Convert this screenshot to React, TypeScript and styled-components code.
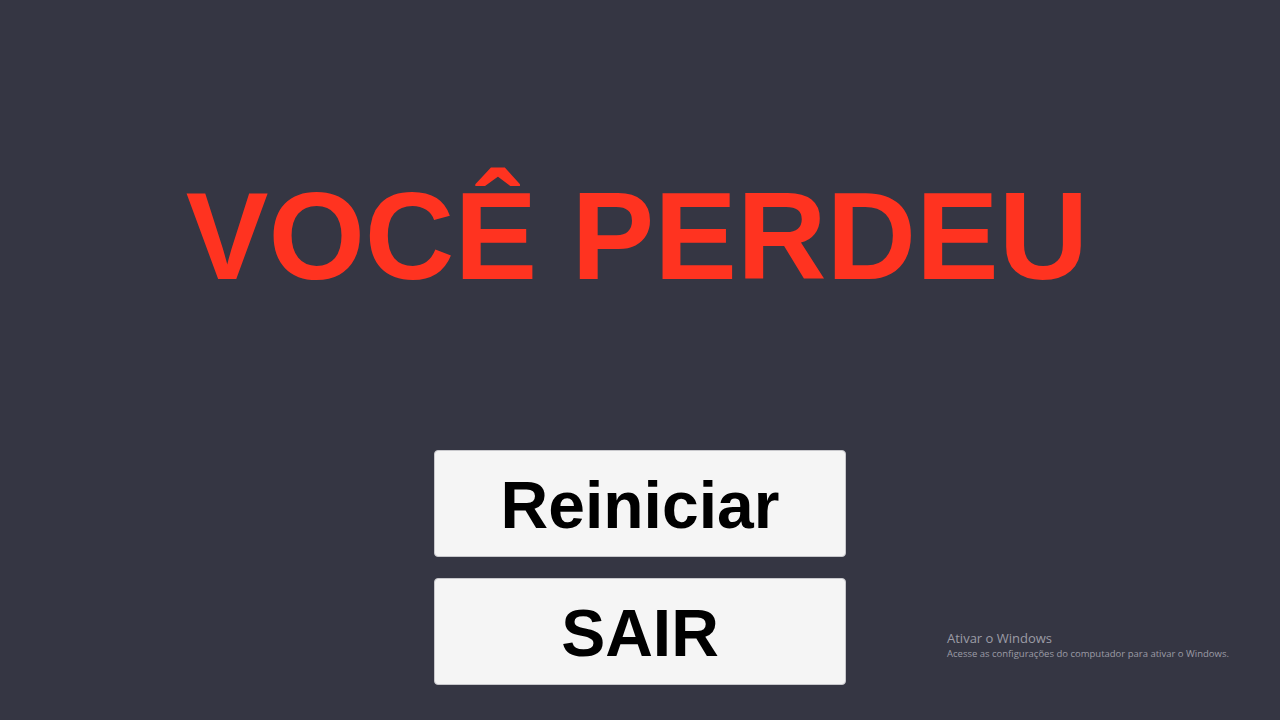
import * as React from "react";
import styled, { createGlobalStyle } from "styled-components";

const GlobalStyle = createGlobalStyle`
  html, body {
    margin: 0;
    padding: 0;
    background: #353643;
  }
  body {
    font-family: "Liberation Sans", Arial, sans-serif;
  }
`;

const Screen = styled.div`
  position: relative;
  width: 1280px;
  height: 720px;
  overflow: hidden;
  background: #353643;
  display: flex;
  flex-direction: column;
  align-items: center;
`;

const Title = styled.h1`
  margin: 174px 0 0 -6px;
  font-family: "Liberation Sans", Arial, sans-serif;
  font-weight: 700;
  font-size: 124px;
  line-height: 125px;
  color: #ff3320;
  white-space: nowrap;
`;

const Menu = styled.div`
  margin-top: 151px;
  display: flex;
  flex-direction: column;
  gap: 21px;
`;

const MenuButton = styled.button`
  width: 412px;
  height: 107px;
  padding: 3px 0 0;
  box-sizing: border-box;
  display: flex;
  align-items: center;
  justify-content: center;
  background: #f5f5f5;
  border: 1px solid #c8c8cc;
  border-radius: 4px;
  font-family: "Liberation Sans", Arial, sans-serif;
  font-weight: 700;
  font-size: 66px;
  line-height: 1;
  color: #000;
  cursor: pointer;
`;

const Watermark = styled.div`
  position: absolute;
  left: 947px;
  top: 630px;
  font-family: "Open Sans", "Noto Sans", sans-serif;
  color: #9c9ca6;
`;

const WatermarkTitle = styled.div`
  font-size: 13px;
  line-height: 17px;
`;

const WatermarkText = styled.div`
  font-size: 9.5px;
  line-height: 14px;
`;

export default function App() {
  return (
    <>
      <GlobalStyle />
      <Screen>
        <Title>VOCÊ PERDEU</Title>
        <Menu>
          <MenuButton>Reiniciar</MenuButton>
          <MenuButton>SAIR</MenuButton>
        </Menu>
        <Watermark>
          <WatermarkTitle>Ativar o Windows</WatermarkTitle>
          <WatermarkText>
            Acesse as configurações do computador para ativar o Windows.
          </WatermarkText>
        </Watermark>
      </Screen>
    </>
  );
}
